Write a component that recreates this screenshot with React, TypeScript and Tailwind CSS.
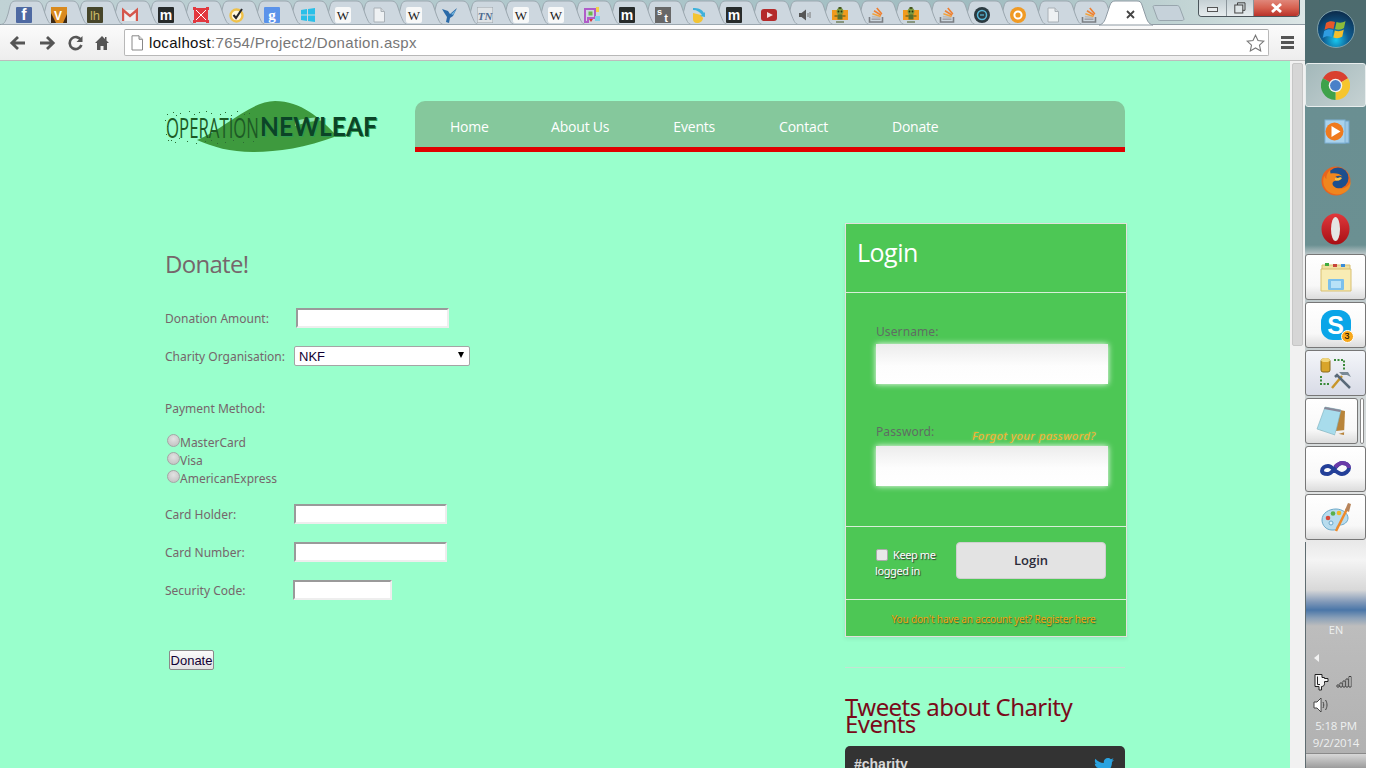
import React from "react";
import { FaTwitter } from "react-icons/fa";

const ui = "font-['Open_Sans','Noto_Sans',sans-serif]";

function Letter({ bg, color, t, size = 12, weight = 700, font = "Liberation Sans" }: { bg: string; color: string; t: string; size?: number; weight?: number; font?: string }) {
  return (
    <svg width="16" height="16" viewBox="0 0 16 16">
      <rect width="16" height="16" rx="1" fill={bg} />
      <text x="8" y="12.5" textAnchor="middle" fontSize={size} fontWeight={weight} fontFamily={font} fill={color}>{t}</text>
    </svg>
  );
}
function Doc() {
  return (
    <svg width="16" height="16" viewBox="0 0 16 16">
      <path d="M3 1h7l3.5 3.5V15H3z" fill="#eef1f3" stroke="#a9b0b6" />
      <path d="M10 1v3.5h3.5" fill="#d5dadd" stroke="#a9b0b6" />
    </svg>
  );
}
function Stack() {
  return (
    <svg width="16" height="16" viewBox="0 0 16 16">
      <path d="M1.5 10v5h13v-5" fill="none" stroke="#7b7f84" strokeWidth="1.6" />
      <path d="M3.5 12.2h9" stroke="#a0a4a8" strokeWidth="1.6" />
      <path d="M3.8 9.6l8.6 .9" stroke="#bcbcbc" strokeWidth="1.6" />
      <path d="M4.4 6.8l8.2 2.6" stroke="#f2a23c" strokeWidth="1.6" />
      <path d="M6 3.8l7.2 4.4" stroke="#f08030" strokeWidth="1.6" />
      <path d="M8.8 1l5 6" stroke="#ee7d2e" strokeWidth="1.6" />
    </svg>
  );
}
function Robot() {
  return (
    <svg width="16" height="16" viewBox="0 0 16 16">
      <path d="M0 3h16v10H0z" fill="#f09a1e" />
      <circle cx="8" cy="4.5" r="3.4" fill="#7e9a3e" />
      <rect x="6.5" y="0" width="3" height="2" fill="#44571f" />
      <circle cx="6.5" cy="4.5" r="0.9" fill="#26300f" />
      <circle cx="9.5" cy="4.5" r="0.9" fill="#26300f" />
      <rect x="5.5" y="7.5" width="5" height="5" fill="#55702e" />
      <path d="M4 15h8M2.500 9h3M10.500 9h3" stroke="#44571f" />
    </svg>
  );
}
function Fav({ k }: { k: number }) {
  switch (k) {
    case 0: return <Letter bg="#4e69a2" color="#fff" t="f" size={16} />;
    case 1: return (
      <svg width="16" height="16" viewBox="0 0 16 16">
        <rect width="16" height="16" fill="#3d2a16" />
        <path d="M0 0h16v7l-4 9H5L0 6z" fill="#d98a1f" />
        <text x="7" y="13" textAnchor="middle" fontSize="12" fontWeight="700" fontFamily="Liberation Sans" fill="#fff">V</text>
      </svg>
    );
    case 2: return <Letter bg="#46452a" color="#c8b765" t="lh" size={13} weight={400} />;
    case 3: return (
      <svg width="16" height="16" viewBox="0 0 16 16">
        <rect x="1" y="3" width="14" height="11" fill="#eceff0" />
        <path d="M1 14V3l7 6 7-6v11" fill="none" stroke="#d5574b" strokeWidth="2.4" />
      </svg>
    );
    case 4: case 17: case 20: return <Letter bg="#272b2b" color="#fff" t="m" size={14} />;
    case 5: return (
      <svg width="16" height="16" viewBox="0 0 16 16">
        <rect x="1" y="1" width="14" height="14" fill="#e2383f" />
        <path d="M3 3l10 10M13 3L3 13" stroke="#fff" strokeWidth="1" />
        <path d="M0 0h3v3H0zM13 0h3v3h-3zM0 13h3v3H0zM13 13h3v3h-3z" fill="#e2383f" />
      </svg>
    );
    case 6: return (
      <svg width="16" height="16" viewBox="0 0 16 16">
        <circle cx="7.5" cy="8.5" r="6" fill="#fff6dc" stroke="#efc14a" strokeWidth="2.4" />
        <path d="M4.5 8l2.5 3 6-9" fill="none" stroke="#26262a" strokeWidth="2" />
      </svg>
    );
    case 7: return <Letter bg="#5b93ea" color="#fff" t="g" size={15} font="Liberation Serif" />;
    case 8: return (
      <svg width="16" height="16" viewBox="0 0 16 16">
        <path d="M1 3l6-1v5.5H1zM8 2l7-1v6.5H8zM1 8.5h6V14l-6-1zM8 8.5h7V15l-7-1z" fill="#29bfe8" />
      </svg>
    );
    case 9: case 11: case 14: case 15: return (
      <svg width="16" height="16" viewBox="0 0 16 16">
        <rect width="16" height="16" rx="2" fill="#f7f8f8" />
        <text x="8" y="12.5" textAnchor="middle" fontSize="13" fontFamily="Liberation Serif" fill="#222">W</text>
      </svg>
    );
    case 10: case 29: return <Doc />;
    case 12: return (
      <svg width="16" height="16" viewBox="0 0 16 16">
        <path d="M0 2l6 2 2 3 7-6-4 8-3 2-1 5-3-1 1-5-2-3z" fill="#2a6aa8" />
        <path d="M9 7l5-4-3 5z" fill="#6fb4dd" />
      </svg>
    );
    case 13: return (
      <svg width="16" height="16" viewBox="0 0 16 16">
        <rect width="16" height="16" fill="#dfe3e6" stroke="#9aa2a8" />
        <text x="8" y="12.5" textAnchor="middle" fontSize="11" fontStyle="italic" fontWeight="700" fontFamily="Liberation Serif" fill="#4e6a8f">TN</text>
      </svg>
    );
    case 16: return (
      <svg width="16" height="16" viewBox="0 0 16 16">
        <path d="M1 2h10v9H4v4H1z" fill="none" stroke="#b05cc8" strokeWidth="2" />
        <rect x="4.5" y="4.5" width="4" height="4" fill="#6bb84c" />
        <path d="M12 0h3v5h-3z" fill="#f2d24a" />
        <path d="M11 9h5v5h-5z" fill="#7fd0e8" />
        <path d="M5 12h4l-2 3z" fill="#d8343c" />
      </svg>
    );
    case 18: return (
      <svg width="16" height="16" viewBox="0 0 16 16">
        <rect width="16" height="16" fill="#676767" />
        <text x="4.5" y="8" textAnchor="middle" fontSize="9" fontWeight="700" fontFamily="Liberation Sans" fill="#fff">s</text>
        <text x="11" y="14.5" textAnchor="middle" fontSize="11" fontWeight="700" fontFamily="Liberation Sans" fill="#fff">t</text>
      </svg>
    );
    case 19: return (
      <svg width="16" height="16" viewBox="0 0 16 16">
        <path d="M3 6l8 2 2 3c0 3-3 5-6 5s-4-2-4-4z" fill="#f3c433" />
        <path d="M3 1c5 0 9 1 11 5l1-1v5l-5-1 2-1C10 5 7 3 3 3z" fill="#3eb1da" />
      </svg>
    );
    case 21: return (
      <svg width="16" height="16" viewBox="0 0 16 16">
        <rect y="2" width="16" height="12" rx="3" fill="#b42a2a" />
        <path d="M6 5l6 3-6 3z" fill="#f2dede" />
      </svg>
    );
    case 22: return (
      <svg width="16" height="16" viewBox="0 0 16 16">
        <path d="M2 6h2.5L9 2.5v11L4.5 10H2z" fill="#555" />
        <path d="M11 6v4M13 5v6" stroke="#777" strokeWidth="1" />
      </svg>
    );
    case 23: case 25: return <Robot />;
    case 24: case 26: case 30: return <Stack />;
    case 27: return (
      <svg width="16" height="16" viewBox="0 0 16 16">
        <circle cx="8" cy="8" r="8" fill="#2b3a40" />
        <circle cx="8" cy="8" r="4.5" fill="none" stroke="#58b8d8" strokeWidth="1.5" />
        <path d="M6 8h4" stroke="#58b8d8" strokeWidth="1.2" />
      </svg>
    );
    case 28: return (
      <svg width="16" height="16" viewBox="0 0 16 16">
        <circle cx="8" cy="8" r="8" fill="#f09a24" />
        <circle cx="8" cy="8" r="3.6" fill="none" stroke="#fff" strokeWidth="2" />
      </svg>
    );
    default: return null;
  }
}

function Tab({ k }: { k: number }) {
  return (
    <div className="relative w-[35.5px] h-[25px] shrink-0 flex items-center justify-center" style={{ zIndex: 60 - k }}>
      <svg className="absolute left-0 top-0 overflow-visible" width="36" height="25" viewBox="0 0 36 25">
        <path d="M-5 24.5C-1 24 0 20 2 14L4 6C5 2 7 1 10 1H30C33 1 35 2 36.500 6L39.500 15C41.500 20 43 24 46 24.500Z" fill="#cdd7df" stroke="#9ba7af" strokeWidth="1" />
      </svg>
      <div className="relative flex mt-[4px]"><Fav k={k} /></div>
    </div>
  );
}

function TabStrip() {
  const tabs = Array.from({ length: 31 }, (_, i) => i);
  return (
    <div className="relative h-[25px] flex bg-[linear-gradient(90deg,#c0d2d5_0%,#a9c4c8_55%,#9fbcc0_75%,#c5d6d6_92%,#dce6e6_100%)] border-b border-[#8f9aa3]">
      <div className="flex pl-[6px]">
        {tabs.map((k) => <Tab key={k} k={k} />)}
        <div className="relative z-[80] w-[38px] h-[25px] flex items-center justify-center -ml-[0.5px]">
          <svg className="absolute left-0 top-0 overflow-visible" width="38" height="25" viewBox="0 0 38 25">
            <path d="M-7 25C-2 24 -1 20 1 14L4 5C5 2 7 1 9 1H31C34 1 35 2 36 5L39 14C41 20 42 24 47 25Z" fill="#fff" stroke="#8e9aa3" />
          </svg>
          <span className="relative flex items-center justify-center mt-[3px] ml-[11px]">
            <svg width="9" height="9" viewBox="0 0 9 9"><path d="M1 1l7 7M8 1L1 8" stroke="#444" strokeWidth="1.8" /></svg>
          </span>
        </div>
        <svg className="relative z-[1] mt-[5px] ml-[8px]" width="34" height="16" viewBox="0 0 34 16">
          <path d="M1 1.5C1 1 2 .5 3 .5H25C26 .5 27 1 27.5 2L32 14C32 15 31 15.5 30 15.5H8C7 15.5 6 15 5.5 14Z" fill="#c6d2da" stroke="#98a5ad" />
        </svg>
      </div>
      <div className="ml-auto mr-[5px] flex h-[17px] w-[102px] rounded-b-[4px] border border-t-0 border-[#4b555b] overflow-hidden">
        <div className="w-[28px] bg-[linear-gradient(180deg,#c5d0d4,#e6ecee)] border-r border-[#8b959b] flex items-center justify-center">
          <span className="block w-[11px] h-[5px] mt-[3px] bg-[#e8ecee] border border-[#555]" />
        </div>
        <div className="w-[27px] bg-[linear-gradient(180deg,#c5d0d4,#e6ecee)] border-r border-[#8b959b] flex items-center justify-center">
          <svg width="12" height="12" viewBox="0 0 12 12"><path d="M3.5 .8h7.5v7.5H3.5z" fill="none" stroke="#444" /><rect x=".8" y="3" width="8" height="8" fill="#dfe6e8" stroke="#444" /></svg>
        </div>
        <div className="flex-1 bg-[linear-gradient(180deg,#e0877a,#d6604f_50%,#b8322a)] flex items-center justify-center">
          <svg width="13" height="10" viewBox="0 0 13 10"><path d="M2 1l9 8M11 1L2 9" stroke="#fff" strokeWidth="2.800" /></svg>
        </div>
      </div>
    </div>
  );
}

function Toolbar() {
  return (
    <div className="h-[36px] flex items-center bg-[linear-gradient(180deg,#fbfbfb,#ededed)] border-b border-[#bdbdbd]">
      <div className="w-[124px] shrink-0 flex items-center pl-[9px] gap-[11px]">
        <svg width="18" height="16" viewBox="0 0 18 16"><path d="M16 8H3M9 2L2.8 8 9 14" fill="none" stroke="#555" strokeWidth="2.8" /></svg>
        <svg width="18" height="16" viewBox="0 0 18 16"><path d="M2 8h13M9 2l6.2 6L9 14" fill="none" stroke="#555" strokeWidth="2.8" /></svg>
        <svg width="17" height="16" viewBox="0 0 17 16"><path d="M14 5.2A6 6 0 1 0 14.4 10" fill="none" stroke="#555" strokeWidth="2.6" /><path d="M15.5 1v6h-6z" fill="#555" /></svg>
        <svg width="14" height="16" viewBox="0 0 14 16"><path d="M7 1L0 8h2v7h3.5v-4h3v4H12V8h2l-2.5-2.5V2H10v2z" fill="#555" /></svg>
      </div>
      <div className="w-[1145px] shrink-0 h-[27px] bg-white border border-[#b8b8b8] border-t-[#a8a8a8] rounded-[2px] flex items-center pl-[5px] pr-[3px]">
        <svg width="14" height="16" viewBox="0 0 14 16" className="shrink-0"><path d="M2 .8h7l3.5 3.5V15H2z" fill="#fff" stroke="#888" /><path d="M9 .8v3.5h3.5" fill="#ddd" stroke="#888" /></svg>
        <span className="ml-[5px] text-[15px] tracking-[0.32px] leading-none font-['Liberation_Sans',sans-serif] text-[#111]">localhost<span className="text-[#777]">:7654/Project2/Donation.aspx</span></span>
        <svg className="ml-auto" width="19" height="18" viewBox="0 0 19 18"><path d="M9.5 1.2l2.5 5.3 5.8.7-4.3 4 1.2 5.7-5.2-2.9-5.2 2.9 1.2-5.7-4.3-4 5.8-.7z" fill="#fff" stroke="#777" strokeWidth="1.1" /></svg>
      </div>
      <div className="ml-[12px] flex flex-col gap-[2px]">
        <span className="block w-[13px] h-[3px] bg-[#555]" />
        <span className="block w-[13px] h-[3px] bg-[#555]" />
        <span className="block w-[13px] h-[3px] bg-[#555]" />
      </div>
    </div>
  );
}

function Logo() {
  return (
    <svg width="215" height="54" viewBox="0 0 215 54" className="shrink-0 -mt-[1px] -mb-[2px]">
      <path d="M32 40C58 30 85 1 110 1C136 1 155 18 172 36C140 48 112 52 88 52C65 52 48 47 32 40Z" fill="#3e9a3e" />
      <path d="M130 21C145 17 158 16 166 20C152 20 142 22 130 26Z" fill="#9cf5c8" opacity="0.8" />
      <g fill="#2c6b33">
        {[[2,14],[8,12],[15,13],[24,11],[34,12],[46,13],[60,12],[72,11],[84,13],[6,40],[14,38],[22,41],[40,41],[52,43],[68,40],[88,41],[2,26],[1,34],[11,15],[29,14],[41,11],[55,14],[66,15],[79,14],[10,42],[31,43],[46,40],[60,42],[78,42],[0,20],[3,40]].map(([x, y], i) => (
          <rect key={i} x={x} y={y} width="1" height="1" />
        ))}
      </g>
      <text x="1" y="38" fontFamily="Open Sans" fontWeight="400" fontSize="28" textLength="93" lengthAdjust="spacingAndGlyphs" fill="#1d5a25">OPERATION</text>
      <text x="96" y="37" fontFamily="Lato" fontWeight="700" fontSize="27" textLength="117" lengthAdjust="spacingAndGlyphs" fill="#2f9a52">NEWLEAF</text>
      <text x="95" y="36" fontFamily="Lato" fontWeight="700" fontSize="27" textLength="117" lengthAdjust="spacingAndGlyphs" fill="#0b4427">NEWLEAF</text>
    </svg>
  );
}

function Nav() {
  return (
    <nav className="w-[710px] h-[51px] ml-[35px] shrink-0 bg-[#85c89c] rounded-t-[10px] border-b-[5px] border-[#e00000] flex pl-[35px] pt-[15px] gap-[64px] text-[14px] leading-[22px] text-white font-['Open_Sans',sans-serif] tracking-[-0.2px]">
      <span className="w-[37px]">Home</span><span>About Us</span><span>Events</span><span>Contact</span><span>Donate</span>
    </nav>
  );
}

const lab = "text-[12px] pt-[2px] text-[#76666b] font-['Noto_Sans',sans-serif]";
const inp = "h-[20px] bg-white border-2 border-t-[#9a9a9a] border-l-[#9a9a9a] border-b-[#eeeeee] border-r-[#eeeeee] block";

function Radio({ label }: { label: string }) {
  return (
    <div className="h-[18px] flex items-center pl-[2px]">
      <span className="block w-[13px] h-[13px] -mt-[4px] rounded-full border border-[#a5a5a5] bg-[radial-gradient(circle_at_50%_35%,#e2e2e2,#bdbdbd)]" />
      <span className={lab}>{label}</span>
    </div>
  );
}

function FormCol() {
  return (
    <div className="w-[680px] shrink-0">
      <h2 className="mt-[26px] h-[30px] leading-[30px] text-[24px] text-[#76666b] font-['Open_Sans',sans-serif] tracking-[-0.7px]">Donate!</h2>
      <div className="mt-[29px] flex items-center h-[20px]">
        <label className={`${lab} w-[131px]`}>Donation Amount:</label>
        <input className={`${inp} w-[153px]`} />
      </div>
      <div className="mt-[18px] flex items-center h-[20px]">
        <label className={`${lab} w-[129px]`}>Charity Organisation:</label>
        <div className="relative">
          <select className="appearance-none w-[176px] h-[20px] pl-[4px] bg-white border border-[#a5a5a5] rounded-[2px] text-[13px] text-[#110033] font-['Liberation_Sans',sans-serif] leading-none block">
            <option>NKF</option>
          </select>
          <span className="absolute right-[6px] top-[6px] w-0 h-0 border-l-[3.5px] border-r-[3.5px] border-t-[6px] border-l-transparent border-r-transparent border-t-black" />
        </div>
      </div>
      <div className={`${lab} mt-[32px] h-[20px] leading-[18px] flex items-center`}>Payment Method:</div>
      <div className="mt-[13px] pt-[2px] h-[54px]">
        <Radio label="MasterCard" />
        <Radio label="Visa" />
        <Radio label="AmericanExpress" />
      </div>
      <div className="mt-[19px] flex items-center h-[20px]">
        <label className={`${lab} w-[129px]`}>Card Holder:</label>
        <input className={`${inp} w-[153px]`} />
      </div>
      <div className="mt-[18px] flex items-center h-[20px]">
        <label className={`${lab} w-[129px]`}>Card Number:</label>
        <input className={`${inp} w-[153px]`} />
      </div>
      <div className="mt-[18px] flex items-center h-[20px]">
        <label className={`${lab} w-[128px]`}>Security Code:</label>
        <input className={`${inp} w-[99px]`} />
      </div>
      <button className="block mt-[50px] ml-[4px] w-[45px] h-[20px] bg-[linear-gradient(180deg,#fafafa,#e2e2e2)] border border-[#8a8a8a] rounded-[2px] text-[13px] leading-none text-[#110033] font-['Liberation_Sans',sans-serif]">Donate</button>
    </div>
  );
}

function LoginField({ className }: { className?: string }) {
  return <div className={`h-[40px] w-[232px] bg-[linear-gradient(180deg,#ececec,#fdfdfd_55%,#ffffff)] shadow-[0_0_6px_#ffffff] ${className ?? ""}`} />;
}

function Login() {
  const lb = "text-[12px] tracking-[0.1px] text-[#5f6d63] font-['Noto_Sans',sans-serif] leading-[16px]";
  return (
    <div className="w-[282px] h-[414px] bg-[#4dc755] border border-[#e3e0dc] shadow-[0_2px_4px_rgba(0,0,0,0.08)]">
      <div className="h-[69px] border-b border-[#d8efd9] pl-[11px] pt-[10px] text-[25px] leading-[36px] text-white font-['Open_Sans',sans-serif] tracking-[-0.5px]">Login</div>
      <div className="h-[234px] border-b border-[#d8efd9] pl-[30px] pt-[31px]">
        <div className={lb}>Username:</div>
        <LoginField className="mt-[4px]" />
        <div className="relative mt-[34px] h-[16px]">
          <span className={lb}>Password:</span>
          <span className="absolute left-[96px] top-[11px] text-[11.5px] leading-[14px] italic text-[#f2b02a] tracking-[0.35px] font-['Noto_Sans',sans-serif] [text-shadow:0_0_2px_rgba(230,230,160,0.6)]">Forgot your password?</span>
        </div>
        <LoginField className="mt-[12px]" />
      </div>
      <div className="h-[73px] border-b border-[#d8efd9] flex pl-[29px] pt-[15px]">
        <div className="w-[81px] text-[11px] leading-[16px] tracking-[-0.4px] text-white font-['Noto_Sans',sans-serif] [text-shadow:1px_1px_1px_#333] pt-[5px]">
          <span className="inline-block w-[12px] h-[12px] align-[-2px] bg-[#e8e8e8] border border-[#aaa] rounded-[2px] mr-[5px] ml-[1px]" />
          Keep me<br />logged in
        </div>
        <button className="w-[150px] h-[37px] bg-[#e3e3e3] border border-[#cfcfcf] rounded-[4px] text-[13px] font-semibold text-[#2b2b3a] font-['Open_Sans',sans-serif]">Login</button>
      </div>
      <div className="h-[36px] flex items-center justify-center pl-[15px] pt-[2px] text-[10px] tracking-[-0.14px] text-[#f0a010] font-['Noto_Sans',sans-serif] [text-shadow:1px_1px_1px_#2f6b2f]">You don't have an account yet? Register here</div>
    </div>
  );
}

function Side() {
  return (
    <div className="w-[282px] shrink-0">
      <Login />
      <div className="w-[280px] mt-[30px] border-t border-[#c4e4d2]" />
      <h3 className="mt-[29px] w-[280px] text-[24px] leading-[17px] tracking-[-0.55px] text-[#7a0a1a] font-['Noto_Sans',sans-serif] pt-[1px]">Tweets about Charity Events</h3>
      <div className="mt-[14px] w-[280px] h-[60px] bg-[#333333] rounded-t-[5px] flex justify-between px-[9px] pt-[9px]">
        <span className="text-[14px] leading-[18px] font-bold text-[#d8d8d8] font-['Liberation_Sans',sans-serif]">#charity</span>
        <FaTwitter className="text-[#2aa3e0] w-[20px] h-[20px] mr-[2px] mt-[1px]" />
      </div>
    </div>
  );
}

function Scrollbar() {
  return (
    <div className="w-[15px] shrink-0 bg-[#f1f1f1] pl-[2px] pt-[2px]">
      <div className="w-[11px] h-[283px] bg-[#d6d6d6] border border-[#c6c6c6] rounded-[2px]" />
    </div>
  );
}

function TB({ children, w = "w-[61px]", tint = false }: { children: React.ReactNode; w?: string; tint?: boolean }) {
  return (
    <div className={`${w} h-[46px] mb-[2px] shrink-0 rounded-[3px] border border-[#777] flex items-center justify-center ${tint ? "bg-[linear-gradient(180deg,#f4f6fa,#d8dbe6)]" : "bg-[linear-gradient(180deg,#ffffff,#f8f8f8_70%,#dcdcdc)]"}`}>
      {children}
    </div>
  );
}

function Orb() {
  return (
    <svg width="38" height="38" viewBox="0 0 38 38">
      <defs>
        <radialGradient id="orb" cx="50%" cy="80%" r="75%"><stop offset="0" stopColor="#18c8f0" /><stop offset="0.45" stopColor="#0f5f94" /><stop offset="1" stopColor="#0c2f50" /></radialGradient>
      </defs>
      <circle cx="19" cy="19" r="18.5" fill="url(#orb)" stroke="#8fb0b8" strokeWidth="0.8" />
      <path d="M9 13c3-2 6-2 9-1l-1.500 7c-3-1-6-1-9 1z" fill="#e8572a" />
      <path d="M19.500 12c3 1 6 1 9-1l-1.500 7c-3 2-6 2-9 1z" fill="#8cbb3a" />
      <path d="M7.200 21c3-2 6-2 9-1l-1.500 7c-3-1-6-1-9 1z" fill="#2f9ce0" />
      <path d="M17.800 20.500c3 1 6 1 9-1L25.300 26.500c-3 2-6 2-9 1z" fill="#f4bf2c" />
    </svg>
  );
}
function Chrome() {
  return (
    <svg width="29" height="29" viewBox="0 0 24 24">
      <path d="M12 12L1.600 6A12 12 0 0 1 22.400 6z" fill="#d9402f" />
      <path d="M12 12L22.400 6A12 12 0 0 1 12 24z" fill="#f6c52d" />
      <path d="M12 12L12 24A12 12 0 0 1 1.600 6z" fill="#3fa24a" />
      <circle cx="12" cy="12" r="5.600" fill="#f2f2f2" />
      <circle cx="12" cy="12" r="4.500" fill="#4a80c8" />
    </svg>
  );
}
function Wmp() {
  return (
    <svg width="28" height="28" viewBox="0 0 28 28">
      <rect x="8" y="2" width="19" height="22" fill="#9fc8e4" stroke="#6ea4cc" />
      <rect x="3" y="1" width="20" height="23" fill="#a9d2ec" stroke="#7fb2d6" />
      <circle cx="12.500" cy="12.500" r="9" fill="#ef7a1e" />
      <path d="M9.500 7l9 5.500-9 5.500z" fill="#fff" />
    </svg>
  );
}
function Firefox() {
  return (
    <svg width="30" height="30" viewBox="0 0 30 30">
      <circle cx="15" cy="15" r="14.500" fill="#e8641e" />
      <circle cx="17" cy="12" r="10.500" fill="#1d4f8e" />
      <path d="M9 4C6 7 5 10 5.500 13 4 12 3.500 11 3.500 9.500 1 14 2 22 8 26c6 4 14 3 19-2 2-2 2.500-5 2.500-8-1.500 3-4 6-9 6.500-5 .5-9-2-9-5 0-2 2-3 5-3 2 0 3-1 3-2-2 0-4-1-5-2 2-1 5-1 7 0-2-3-8-4-12-3z" fill="#f0861e" />
      <path d="M14 12c2 .5 4 0 5-1l2 1c-1 2-4 3.500-7 2z" fill="#f6c24a" />
    </svg>
  );
}
function Opera() {
  return (
    <svg width="29" height="32" viewBox="0 0 29 32">
      <defs><linearGradient id="op" x1="0" y1="0" x2="0" y2="1"><stop offset="0" stopColor="#e0383c" /><stop offset="1" stopColor="#a80f14" /></linearGradient></defs>
      <ellipse cx="14.500" cy="16" rx="14" ry="15.500" fill="url(#op)" />
      <ellipse cx="14.500" cy="16" rx="4.500" ry="12" fill="#e4e6e4" />
    </svg>
  );
}
function Folder() {
  return (
    <svg width="32" height="30" viewBox="0 0 32 30">
      <path d="M2 3h28v6H2z" fill="#efe0a0" stroke="#d8bf70" />
      <rect x="5" y="1" width="4" height="3" fill="#3faa3f" />
      <rect x="13" y="2" width="4" height="3" fill="#c8443a" />
      <rect x="21" y="2" width="4" height="3" fill="#3a8cd8" />
      <path d="M1 7h30v22H1z" fill="#f8ecb4" stroke="#d8bf70" />
      <rect x="8" y="17" width="16" height="11" rx="1" fill="#7cc0ec" />
      <rect x="11" y="19" width="10" height="7" fill="#b8e2f8" />
    </svg>
  );
}
function Skype() {
  return (
    <div className="relative w-[30px] h-[30px] rounded-[12px] bg-[#0aa5e8] flex items-center justify-center">
      <span className="text-[25px] leading-none font-bold text-white font-['Liberation_Sans',sans-serif]">S</span>
      <span className="absolute -right-[3px] -bottom-[3px] w-[13px] h-[13px] rounded-full bg-[#f7a81b] border border-white text-[9px] leading-[11px] text-center text-black font-['Liberation_Sans',sans-serif]">3</span>
    </div>
  );
}
function SqlTool() {
  return (
    <svg width="32" height="32" viewBox="0 0 32 32">
      <rect x="1" y="2" width="9" height="13" rx="2" fill="#d9a52a" stroke="#8a6a1a" />
      <ellipse cx="5.500" cy="3" rx="4.500" ry="2" fill="#f2d67a" />
      <path d="M14 3h10v10M1 19v8h9" fill="none" stroke="#3a8a3a" strokeWidth="2" strokeDasharray="2 1.500" />
      <path d="M12 31L22 19" stroke="#c8962a" strokeWidth="2.500" />
      <path d="M30 31L17 18l-2 2" stroke="#5a6a78" strokeWidth="2.500" fill="none" />
      <path d="M19 15h9l3 5-4-2h-5z" fill="#7a8a96" />
    </svg>
  );
}
function Notepad() {
  return (
    <svg width="32" height="32" viewBox="0 0 32 32">
      <path d="M9 2l20 4-1 24-24-5z" fill="#b8843a" />
      <path d="M9 2l16 3-6 25L1 24z" fill="#a8dcec" stroke="#78aebc" strokeWidth="0.6" />
      <path d="M9 2l16 3-1 2L8 4z" fill="#889" />
      <path d="M19 30l10-3 0-2-9 1z" fill="#f0f0f0" />
    </svg>
  );
}
function Infinity() {
  return (
    <svg width="33" height="18" viewBox="0 0 33 18">
      <path d="M3 11c0-3 3-5 6-5 5 0 8 8 14 8 3 0 7-3 7-6s-3-5-7-5c-6 0-9 11-14 11-3 0-6-1-6-3z" fill="none" stroke="#233f98" strokeWidth="4" />
      <path d="M16 7c2-2 4-4 7-4 4 0 7 2 7 5" fill="none" stroke="#6a3aa8" strokeWidth="4" />
    </svg>
  );
}
function Palette() {
  return (
    <svg width="32" height="32" viewBox="0 0 32 32">
      <path d="M2 19c0-7 7-11 14-11 6 0 12 4 12 9 0 4-4 7-8 7-2 0-3 1-3 3s-2 2-5 2C6 29 2 24 2 19z" fill="#b8dcee" stroke="#6aa8c8" />
      <circle cx="8" cy="17" r="2.300" fill="#d84a3a" />
      <circle cx="13" cy="12.500" r="2.300" fill="#5ab04a" />
      <circle cx="19" cy="12" r="2.300" fill="#f0b82a" />
      <circle cx="11" cy="22" r="2" fill="#e8f4fa" stroke="#6aa8c8" />
      <path d="M16 30L27 8" stroke="#ee8a2a" strokeWidth="2.500" />
      <path d="M25 9l3-7 3 1-2 8z" fill="#b8845a" />
    </svg>
  );
}

function Tray() {
  return (
    <div className="flex-1 w-full flex flex-col items-center border-l border-[#5f6c70] text-[#eef0f0] font-['Open_Sans',sans-serif]">
      <div className="mt-[80px] h-[16px] leading-[16px] text-[11px]">EN</div>
      <div className="mt-[14px] w-full h-[12px] pl-[8px] flex items-center">
        <span className="w-0 h-0 border-y-[4px] border-y-transparent border-r-[5px] border-r-[#f2f2f2]" />
      </div>
      <div className="mt-[7px] w-full h-[22px] pl-[7px] pr-[14px] flex items-center justify-between">
        <svg width="16" height="18" viewBox="0 0 16 18"><path d="M2 1.500h7v3h2.500v1H15v3h-3.500v2c0 2-1 3-3 3v3.500H6v-3.500H2z" fill="#f4f4f4" stroke="#222" /><path d="M4.500 3.500v8H7" stroke="#222" fill="none" /></svg>
        <svg width="16" height="12" viewBox="0 0 16 12"><path d="M1 9h2v2H1zM4 7h2v4H4zM7 5h2v6H7zM10 3h2v8h-2zM13 .5h2v10.500h-2z" fill="#fff" stroke="#222" strokeWidth="0.8" /></svg>
      </div>
      <div className="w-full h-[24px] pl-[7px] flex items-center">
        <svg width="16" height="16" viewBox="0 0 16 16"><path d="M1 5h3l4-4v14l-4-4H1z" fill="#fff" stroke="#444" /><path d="M10 5c1 2 1 4 0 6M12.500 3c2 3 2 7 0 10" stroke="#444" fill="none" /></svg>
      </div>
      <div className="h-[17px] leading-[17px] text-[11.500px] tracking-[-0.2px]">5:18 PM</div>
      <div className="h-[17px] leading-[17px] text-[11.500px] tracking-[-0.2px]">9/2/2014</div>
      <div className="mt-auto w-full h-[15px] border-t border-[#8a8a8a] bg-[linear-gradient(180deg,#d8d8d8,#9c9c9c)]" />
    </div>
  );
}

function Taskbar() {
  return (
    <div className="w-[61px] h-full shrink-0 flex flex-col bg-[linear-gradient(180deg,#4d6b6e_0px,#4d6b70_62px,#6a8f92_110px,#6b9092_245px,#b8c4c6_254px,#e8e8e8_540px,#f4f4f4_560px,#d8d8d8_590px,#8098b8_602px,#4a76a8_610px,#8aa0b8_618px,#bdbdbd_626px,#b0b0b0_768px)]">
      <div className="h-[63px] shrink-0 flex items-center justify-center pb-[5px]"><Orb /></div>
      <div className="h-[44px] shrink-0 rounded-[3px] border border-[#e8eeee] bg-[linear-gradient(135deg,#a3b8ba,#c6d2d3)] flex items-center justify-center"><Chrome /></div>
      <div className="mt-[2px] h-[48px] shrink-0 flex items-center justify-center"><Wmp /></div>
      <div className="h-[48px] shrink-0 flex items-center justify-center"><Firefox /></div>
      <div className="h-[48px] shrink-0 flex items-center justify-center"><Opera /></div>
      <div className="h-[1px] shrink-0" />
      <TB><Folder /></TB>
      <TB><Skype /></TB>
      <TB tint><SqlTool /></TB>
      <div className="flex gap-[2px] h-[48px] shrink-0">
        <TB w="w-[53px]"><Notepad /></TB>
        <div className="w-[4px] h-[46px] border border-[#888] rounded-[2px] bg-white" />
      </div>
      <TB><Infinity /></TB>
      <TB><Palette /></TB>
      <Tray />
    </div>
  );
}

export default function App() {
  return (
    <div className={`w-[1374px] h-[768px] overflow-hidden flex bg-white ${ui}`}>
      <div className="w-[1305px] h-full shrink-0 flex flex-col">
        <TabStrip />
        <Toolbar />
        <div className="flex-1 min-h-0 flex">
          <main className="flex-1 bg-[#99ffcc] overflow-hidden pl-[165px] pt-[40px]">
            <div className="flex items-start">
              <Logo />
              <Nav />
            </div>
            <div className="flex mt-[71px]">
              <FormCol />
              <Side />
            </div>
          </main>
          <Scrollbar />
        </div>
      </div>
      <Taskbar />
      <div className="flex-1 bg-white" />
    </div>
  );
}
